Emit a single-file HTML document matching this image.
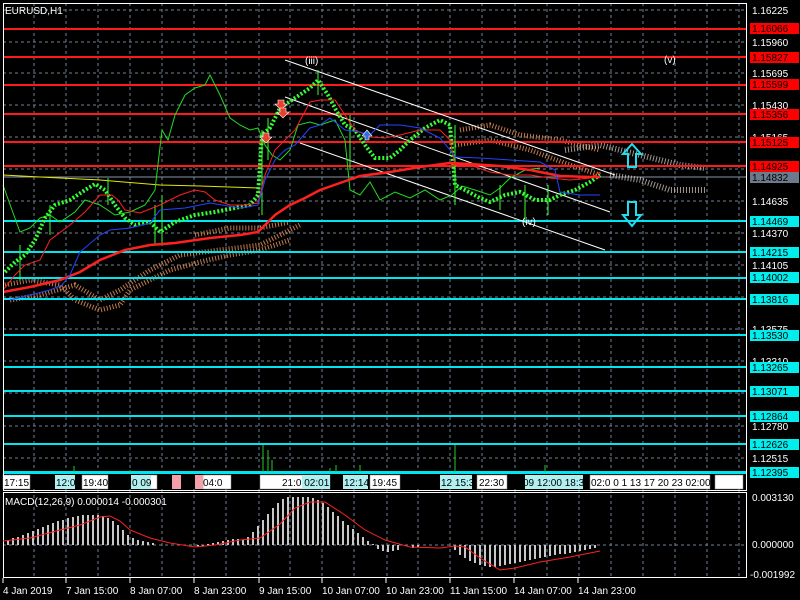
<!DOCTYPE html>
<html><head><meta charset="utf-8"><style>
body{margin:0;background:#000;width:800px;height:600px;overflow:hidden;font-family:"Liberation Sans",sans-serif}
svg{display:block}
text{font-family:"Liberation Sans",sans-serif;font-size:10px}
</style></head><body>
<svg width="800" height="600" viewBox="0 0 800 600">
<rect width="800" height="600" fill="#000"/>
<!-- vertical grid -->
<g stroke="#6f7f95" stroke-dasharray="3,3" stroke-width="1">
<line x1="34" y1="3" x2="34" y2="578"/><line x1="66" y1="3" x2="66" y2="578"/><line x1="98" y1="3" x2="98" y2="578"/><line x1="130" y1="3" x2="130" y2="578"/><line x1="162" y1="3" x2="162" y2="578"/><line x1="194" y1="3" x2="194" y2="578"/><line x1="226" y1="3" x2="226" y2="578"/><line x1="259" y1="3" x2="259" y2="578"/><line x1="290" y1="3" x2="290" y2="578"/><line x1="322" y1="3" x2="322" y2="578"/><line x1="354" y1="3" x2="354" y2="578"/><line x1="387" y1="3" x2="387" y2="578"/><line x1="418" y1="3" x2="418" y2="578"/><line x1="450" y1="3" x2="450" y2="578"/><line x1="482" y1="3" x2="482" y2="578"/><line x1="515" y1="3" x2="515" y2="578"/><line x1="547" y1="3" x2="547" y2="578"/><line x1="579" y1="3" x2="579" y2="578"/><line x1="611" y1="3" x2="611" y2="578"/><line x1="643" y1="3" x2="643" y2="578"/><line x1="675" y1="3" x2="675" y2="578"/><line x1="707" y1="3" x2="707" y2="578"/><line x1="739" y1="3" x2="739" y2="578"/>
</g>
<!-- horizontal grid -->
<g stroke="#6f7f95" stroke-dasharray="3,3">
<line x1="3" y1="10" x2="746" y2="10"/><line x1="3" y1="42" x2="746" y2="42"/><line x1="3" y1="73" x2="746" y2="73"/><line x1="3" y1="105" x2="746" y2="105"/><line x1="3" y1="137" x2="746" y2="137"/><line x1="3" y1="169" x2="746" y2="169"/><line x1="3" y1="201" x2="746" y2="201"/><line x1="3" y1="233" x2="746" y2="233"/><line x1="3" y1="265" x2="746" y2="265"/><line x1="3" y1="297" x2="746" y2="297"/><line x1="3" y1="329" x2="746" y2="329"/><line x1="3" y1="361" x2="746" y2="361"/><line x1="3" y1="393" x2="746" y2="393"/><line x1="3" y1="426" x2="746" y2="426"/><line x1="3" y1="458" x2="746" y2="458"/>
<line x1="3" y1="545" x2="746" y2="545"/>
</g>
<line x1="3" y1="177" x2="746" y2="177" stroke="#8a96a6"/>
<!-- cloud -->
<g fill="none" stroke="#e8905a" stroke-dasharray="1,2" stroke-width="5" opacity="0.85">
<path d="M5 285 L30 280 L60 285 L75 300 L100 310 L120 305 L130 290 L150 280 L170 270 L200 262 L230 255 L260 250 L290 240"/>
<path d="M10 300 L40 295 L75 285 L100 300 L120 290 L150 270 L180 255 L220 250 L260 245 L300 225"/>
<path d="M195 235 L230 228 L260 228 L290 222"/>
<path d="M460 130 L490 125 L520 135 L560 140 L600 150"/>
<path d="M455 145 L490 140 L530 150 L570 165 L600 175"/>
</g>
<g fill="none" stroke="#e8d8d0" stroke-dasharray="1,2" stroke-width="6" opacity="0.7">
<path d="M565 150 L600 145 L640 155 L680 165 L705 168"/>
<path d="M610 175 L640 180 L670 190 L705 190"/>
</g>
<!-- horizontal levels -->
<g stroke="#ff1a1a" stroke-width="2">
<line x1="3" y1="29" x2="746" y2="29"/><line x1="3" y1="57" x2="746" y2="57"/><line x1="3" y1="85" x2="746" y2="85"/><line x1="3" y1="114" x2="746" y2="114"/><line x1="3" y1="142" x2="746" y2="142"/><line x1="3" y1="166" x2="746" y2="166"/>
</g>
<g stroke="#00e5ee" stroke-width="2">
<line x1="3" y1="221" x2="746" y2="221"/><line x1="3" y1="252" x2="746" y2="252"/><line x1="3" y1="278" x2="746" y2="278"/><line x1="3" y1="299" x2="746" y2="299"/><line x1="3" y1="335" x2="746" y2="335"/><line x1="3" y1="367" x2="746" y2="367"/><line x1="3" y1="391" x2="746" y2="391"/><line x1="3" y1="416" x2="746" y2="416"/><line x1="3" y1="444" x2="746" y2="444"/><line x1="3" y1="472" x2="746" y2="472"/>
</g>
<!-- channel lines -->
<g stroke="#fff" stroke-width="1">
<line x1="285" y1="60" x2="615" y2="175"/><line x1="285" y1="97" x2="610" y2="212"/><line x1="300" y1="143" x2="605" y2="250"/>
</g>
<!-- yellow line -->
<polyline fill="none" points="3,175 40,177 100,180 160,185 200,186 258,188" stroke="#e6e600" stroke-width="1"/>
<!-- green oscillator line -->
<polyline fill="none" stroke="#22dd22" stroke-width="1" points="3,185 12,210 20,232 30,228 40,218 50,215 60,222 75,212 85,200 100,205 115,215 130,212 145,205 155,190 162,130 168,140 175,115 185,95 195,88 205,85 210,75 220,95 230,118 240,125 250,130 258,128 265,145 272,155 280,160 290,150 298,125 310,122 320,125 335,120 345,140 350,190 360,195 370,182 380,200 395,192 410,198 425,190 440,200 452,195 462,186 475,190 490,195 500,188 510,178 525,170 540,168"/>
<!-- price candles -->
<polyline fill="none" stroke="#33ff33" stroke-width="4" stroke-dasharray="2,2" points="5,272 15,262 25,255 35,240 45,218 55,205 70,200 85,190 95,184 105,190 115,205 125,218 135,225 150,222 160,232 175,222 195,215 215,212 235,208 250,205 258,195 262,135 270,128 280,108 295,98 310,88 318,80 328,95 336,110 345,125 355,130 365,145 375,158 390,158 400,150 410,140 425,128 440,120 450,125 455,185 465,190 480,198 490,202 505,195 520,192 535,200 550,200 560,195 575,190 590,182 600,175"/>
<g stroke="#33ff33" stroke-width="1">
<line x1="20" y1="245" x2="20" y2="280"/><line x1="50" y1="205" x2="50" y2="235"/><line x1="108" y1="178" x2="108" y2="205"/><line x1="155" y1="205" x2="155" y2="245"/><line x1="162" y1="195" x2="162" y2="245"/><line x1="262" y1="130" x2="262" y2="215"/><line x1="268" y1="118" x2="268" y2="160"/><line x1="318" y1="70" x2="318" y2="95"/><line x1="350" y1="115" x2="350" y2="170"/><line x1="455" y1="125" x2="455" y2="205"/><line x1="500" y1="185" x2="500" y2="210"/><line x1="525" y1="185" x2="525" y2="220"/><line x1="548" y1="185" x2="548" y2="215"/>
</g>
<!-- MAs -->
<polyline fill="none" stroke="#ff2020" stroke-width="2.5" points="3,292 30,287 60,280 80,272 100,260 125,250 150,245 175,243 210,238 240,235 258,232 275,215 290,205 305,198 320,190 340,183 360,176 390,172 420,167 450,163 470,164 500,166 530,170 560,176 590,177 600,177"/>
<polyline fill="none" stroke="#ff2020" stroke-width="1" points="3,290 15,275 25,265 40,260 50,240 70,225 85,212 100,195 112,195 118,200 125,210 140,213 160,205 170,200 180,195 195,190 205,192 215,200 230,205 245,205 258,203 265,175 275,150 285,140 295,130 310,102 320,100 335,100 345,115 355,130 370,137 385,138 400,135 420,130 440,130 450,140 455,165 470,165 490,172 510,175 530,175 550,178 570,180 590,178 600,172"/>
<polyline fill="none" stroke="#2244ff" stroke-width="1" points="10,300 30,295 50,290 62,285 70,275 80,252 100,235 110,230 130,228 150,223 160,210 185,208 210,203 240,208 258,205 265,180 275,160 285,150 295,145 310,128 320,125 330,118 345,130 360,132 370,135 380,125 400,125 420,128 440,138 450,150 455,157 480,158 510,160 540,162 555,170 560,192 580,195 600,195"/>
<!-- fractal arrows -->
<g fill="#e84030" stroke="#fff" stroke-width="0.6">
<path d="M263 133h6v4h3l-6 6-6-6h3z"/><path d="M278 100h6v4h3l-6 6-6-6h3z"/><path d="M280 108h6v4h3l-6 6-6-6h3z"/>
</g>
<path d="M362 136l5-6 5 6h-3v4h-4v-4z" fill="#2a70e0" stroke="#fff" stroke-width="0.6"/>
<!-- wave labels -->
<text x="305" y="64" fill="#fff" font-size="14">(iii)</text>
<text x="664" y="63" fill="#fff" font-size="14">(v)</text>
<text x="522" y="225" fill="#fff" font-size="14">(iv)</text>
<!-- arrows -->
<path d="M628 167 V154 H623 L632 144 L641 154 H636 V167 Z" fill="none" stroke="#22ddee" stroke-width="2"/>
<path d="M628 202 V215 H623 L632 226 L641 215 H636 V202 Z" fill="none" stroke="#22ddee" stroke-width="2"/>
<text x="5" y="14" fill="#fff">EURUSD,H1</text>
<!-- volumes -->
<g stroke="#22cc22" stroke-width="1">
<line x1="74" y1="478" x2="74" y2="466"/><line x1="263" y1="478" x2="263" y2="445"/><line x1="268" y1="478" x2="268" y2="450"/><line x1="272" y1="478" x2="272" y2="460"/><line x1="455" y1="478" x2="455" y2="445"/><line x1="360" y1="478" x2="360" y2="465"/><line x1="545" y1="478" x2="545" y2="465"/><line x1="130" y1="478" x2="130" y2="470"/><line x1="330" y1="478" x2="330" y2="468"/><line x1="336" y1="478" x2="336" y2="465"/>
</g>
<!-- time labels strip -->
<g font-size="10">
<rect x="3" y="474" width="740" height="15" fill="#000"/>
<g fill="#fff" stroke="#888" stroke-width="0.5">
<rect x="3" y="475" width="27" height="14"/><rect x="82" y="475" width="26" height="14"/><rect x="140" y="475" width="17" height="14"/><rect x="203" y="475" width="28" height="14"/><rect x="260" y="475" width="70" height="14"/><rect x="370" y="475" width="30" height="14"/><rect x="477" y="475" width="30" height="14"/><rect x="590" y="475" width="120" height="14"/><rect x="715" y="475" width="28" height="14"/>
</g>
<g fill="#b0f0f0"><rect x="55" y="475" width="20" height="14"/><rect x="131" y="475" width="20" height="14"/><rect x="302" y="475" width="28" height="14"/><rect x="343" y="475" width="25" height="14"/><rect x="440" y="475" width="32" height="14"/><rect x="525" y="475" width="58" height="14"/></g>
<g fill="#f4a0a8"><rect x="172" y="475" width="9" height="14"/><rect x="195" y="475" width="8" height="14"/></g>
<text x="4" y="486" fill="#000">17:15</text><text x="56" y="486" fill="#000">12:0</text><text x="83" y="486" fill="#000">19:40</text><text x="132" y="486" fill="#000">0 09</text><text x="203" y="486" fill="#000">04:0</text><text x="282" y="486" fill="#000">21:0 02:01</text><text x="344" y="486" fill="#000">12:14</text><text x="372" y="486" fill="#000">19:45</text><text x="401" y="486" fill="#000">02:00</text><text x="441" y="486" fill="#000">12 15:3</text><text x="479" y="486" fill="#000">22:30</text><text x="523" y="486" fill="#000">09 12:00 18:30</text><text x="591" y="486" fill="#000">02:0 0 1 13 17 20 23 02:00</text>
</g>
<line x1="3" y1="473" x2="746" y2="473" stroke="#00e5ee" stroke-width="2"/>
<!-- frames -->
<rect x="3.5" y="3.5" width="743" height="487" fill="none" stroke="#fff"/>
<rect x="3.5" y="492.5" width="743" height="85" fill="none" stroke="#fff"/>
<!-- MACD histogram -->
<g stroke="#c8c8c8" stroke-width="2">
<path d="M8 545V540M13 545V538M18 545V537M23 545V535M28 545V533M33 545V531M38 545V529M43 545V527M48 545V525M53 545V523M58 545V521M63 545V520M68 545V518M73 545V517M78 545V516M83 545V515M88 545V515M93 545V515M98 545V515M103 545V516M108 545V518M113 545V521M118 545V525M123 545V530M128 545V535M133 545V538M138 545V540M143 545V541M148 545V542M153 545V543M198 545V547M203 545V546M208 545V544M213 545V543M218 545V542M223 545V541M228 545V540M233 545V539M238 545V539M243 545V540M248 545V537M253 545V532M258 545V526M263 545V520M268 545V514M273 545V508M278 545V503M283 545V499M288 545V497M293 545V497M298 545V497M303 545V497M308 545V497M313 545V498M318 545V500M323 545V503M328 545V507M333 545V512M338 545V516M343 545V521M348 545V525M353 545V529M358 545V533M363 545V537M368 545V541M373 545V544M378 545V549M383 545V551M388 545V552M393 545V551M398 545V550M413 545V548M418 545V547M428 545V545M455 545V550M460 545V555M465 545V558M470 545V561M475 545V563M480 545V565M485 545V566M490 545V567M495 545V567M500 545V566M505 545V565M510 545V564M515 545V563M520 545V562M525 545V561M530 545V560M535 545V559M540 545V558M545 545V557M550 545V556M555 545V555M560 545V554M565 545V554M570 545V553M575 545V552M580 545V551M585 545V550M590 545V549M595 545V548"/>
</g>
<polyline fill="none" stroke="#ff2020" stroke-width="1" points="3,541 30,538 60,530 80,525 100,517 110,516 120,521 130,530 150,538 170,543 195,547 215,545 240,540 260,538 280,524 295,508 310,502 325,502 345,515 365,530 385,540 410,547 440,548 455,546 465,547 480,558 500,570 515,568 540,562 570,557 600,551"/>
<text x="5" y="505" fill="#fff">MACD(12,26,9) 0.000014 -0.000301</text>
<!-- right axis -->
<g fill="#fff" font-size="10">
<text x="752" y="14">1.16225</text><text x="752" y="46">1.15960</text><text x="752" y="77">1.15695</text><text x="752" y="109">1.15430</text><text x="752" y="141">1.15165</text><text x="752" y="205">1.14635</text><text x="752" y="237">1.14370</text><text x="752" y="269">1.14105</text><text x="752" y="333">1.13575</text><text x="752" y="365">1.13310</text><text x="752" y="397">1.13045</text><text x="752" y="430">1.12780</text><text x="752" y="462">1.12515</text>
<text x="752" y="501">0.003130</text><text x="752" y="548">0.000000</text><text x="750" y="578">-0.001992</text>
</g>
<g font-size="10">
<rect x="750" y="23" width="49" height="11" fill="#ff0000"/><text x="752" y="32" fill="#000">1.16066</text>
<rect x="750" y="52" width="49" height="11" fill="#ff0000"/><text x="752" y="61" fill="#000">1.15827</text>
<rect x="750" y="79" width="49" height="11" fill="#ff0000"/><text x="752" y="88" fill="#000">1.15599</text>
<rect x="750" y="109" width="49" height="11" fill="#ff0000"/><text x="752" y="118" fill="#000">1.15356</text>
<rect x="750" y="137" width="49" height="11" fill="#ff0000"/><text x="752" y="146" fill="#000">1.15125</text>
<rect x="750" y="161" width="49" height="11" fill="#ff0000"/><text x="752" y="170" fill="#000">1.14925</text>
<rect x="750" y="172" width="49" height="11" fill="#6b7b8b"/><text x="752" y="181" fill="#000">1.14832</text>
<rect x="750" y="216" width="49" height="11" fill="#00eeee"/><text x="752" y="225" fill="#000">1.14469</text>
<rect x="750" y="247" width="49" height="11" fill="#00eeee"/><text x="752" y="256" fill="#000">1.14215</text>
<rect x="750" y="272" width="49" height="11" fill="#00eeee"/><text x="752" y="281" fill="#000">1.14002</text>
<rect x="750" y="294" width="49" height="11" fill="#00eeee"/><text x="752" y="303" fill="#000">1.13816</text>
<rect x="750" y="330" width="49" height="11" fill="#00eeee"/><text x="752" y="339" fill="#000">1.13530</text>
<rect x="750" y="362" width="49" height="11" fill="#00eeee"/><text x="752" y="371" fill="#000">1.13265</text>
<rect x="750" y="386" width="49" height="11" fill="#00eeee"/><text x="752" y="395" fill="#000">1.13071</text>
<rect x="750" y="411" width="49" height="11" fill="#00eeee"/><text x="752" y="420" fill="#000">1.12864</text>
<rect x="750" y="439" width="49" height="11" fill="#00eeee"/><text x="752" y="448" fill="#000">1.12626</text>
<rect x="750" y="467" width="49" height="11" fill="#00eeee"/><text x="752" y="476" fill="#000">1.12395</text>
</g>
<!-- bottom dates -->
<g fill="#fff" font-size="10">
<text x="3" y="594">4 Jan 2019</text><text x="66" y="594">7 Jan 15:00</text><text x="130" y="594">8 Jan 07:00</text><text x="194" y="594">8 Jan 23:00</text><text x="259" y="594">9 Jan 15:00</text><text x="322" y="594">10 Jan 07:00</text><text x="386" y="594">10 Jan 23:00</text><text x="450" y="594">11 Jan 15:00</text><text x="514" y="594">14 Jan 07:00</text><text x="578" y="594">14 Jan 23:00</text>
</g>
<g stroke="#fff"><line x1="3" y1="578" x2="3" y2="583"/><line x1="66" y1="578" x2="66" y2="583"/><line x1="130" y1="578" x2="130" y2="583"/><line x1="194" y1="578" x2="194" y2="583"/><line x1="259" y1="578" x2="259" y2="583"/><line x1="322" y1="578" x2="322" y2="583"/><line x1="386" y1="578" x2="386" y2="583"/><line x1="450" y1="578" x2="450" y2="583"/><line x1="514" y1="578" x2="514" y2="583"/><line x1="578" y1="578" x2="578" y2="583"/></g>
</svg>
</body></html>
